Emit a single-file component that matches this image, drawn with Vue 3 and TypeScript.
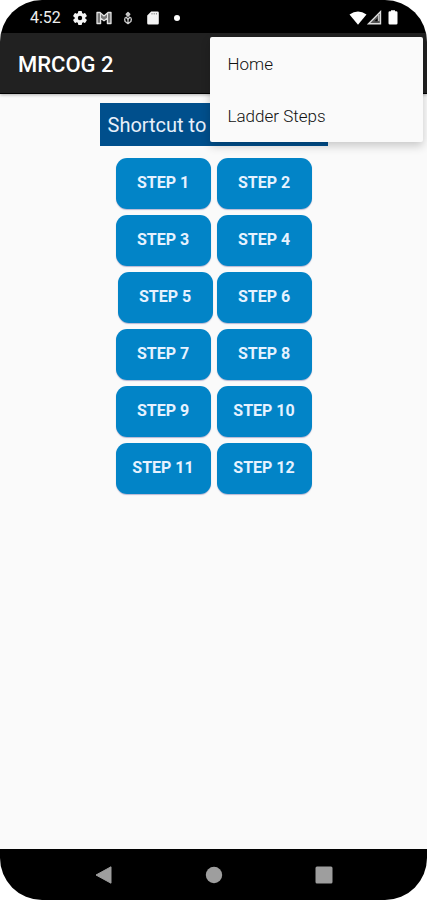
<script setup lang="ts">
interface StepRow {
  steps: number[]
  tight?: boolean
}

const menuItems: string[] = ['Home', 'Ladder Steps']

const rows: StepRow[] = [
  { steps: [1, 2] },
  { steps: [3, 4] },
  { steps: [5, 6], tight: true },
  { steps: [7, 8] },
  { steps: [9, 10] },
  { steps: [11, 12] },
]
</script>

<template>
  <div class="screen">
    <div class="status">
      <div class="status-left">
        <span class="clock">4:52</span>
        <svg class="gear" width="14" height="16" viewBox="0 0 14 16" aria-hidden="true">
          <g fill="#f4f4f4">
            <rect x="5" y="1" width="4" height="14" rx="1" />
            <rect x="5" y="1" width="4" height="14" rx="1" transform="rotate(60 7 8)" />
            <rect x="5" y="1" width="4" height="14" rx="1" transform="rotate(120 7 8)" />
            <circle cx="7" cy="8" r="5.400" />
          </g>
          <circle cx="7" cy="8" r="2.200" fill="#000" />
        </svg>
        <svg class="mail" width="16" height="14" viewBox="0 0 16 14" aria-hidden="true">
          <path d="M1 1.500h3l4 3.400 4-3.400h3v11h-3.600V7.200L8 9.800 4.600 7.200v5.300H1z" fill="#777" stroke="#e4e4e4" stroke-width="1.300" stroke-linejoin="round" />
          <path d="M4.500 2v5M11.500 2v5" stroke="#e4e4e4" />
        </svg>
        <svg class="flame" width="10" height="14" viewBox="0 0 10 14" aria-hidden="true">
          <path d="M5 1v4M3.200 3.200L5 1.400l1.800 1.800L5 5.200zM1.500 7.500L3.300 6.200 5 8.500l1.700-2.300 1.800 1.300M1.500 7.500l.6 3L5 12.600l2.900-2.100.6-3M5 8.500v3" fill="none" stroke="#ccc" stroke-width="1.300" stroke-linejoin="round" />
        </svg>
        <svg class="card" width="12" height="14" viewBox="0 0 12 14" aria-hidden="true">
          <path d="M4.200.5h6.300a1.300 1.300 0 0 1 1.300 1.300v10.400a1.300 1.300 0 0 1-1.300 1.300h-9A1.300 1.300 0 0 1 .2 12.200V4.500z" fill="#f4f4f4" />
          <path d="M5 2v1.500M7.200 2v1.500M9.400 2v1.500" stroke="#888" />
        </svg>
        <span class="dot"></span>
      </div>
      <div class="status-right">
        <svg width="18" height="14" viewBox="0 0 18 14" aria-hidden="true">
          <path d="M.5 3.500Q9-2.500 17.500 3.500L9 13.700z" fill="#fff" />
        </svg>
        <svg width="15" height="15" viewBox="0 0 15 15" aria-hidden="true">
          <path d="M1.600 13.700L13.500 1.800v11.900z" fill="#555" stroke="#ddd" stroke-width="1.400" />
          <path d="M7.500 11.300l3-3v3z" fill="#000" />
          <path d="M11.700 5v6" stroke="#bbb" stroke-width="1.500" />
        </svg>
        <svg class="battery" width="10" height="15" viewBox="0 0 10 15" aria-hidden="true">
          <path d="M3 .3h4v1h1.200A1.300 1.300 0 0 1 9.500 2.600v10.700a1.300 1.300 0 0 1-1.300 1.300H1.800A1.300 1.300 0 0 1 .5 13.300V2.600a1.300 1.300 0 0 1 1.300-1.300H3z" fill="#fff" />
        </svg>
      </div>
    </div>

    <header class="appbar">
      <h1>MRCOG 2</h1>
      <nav class="menu">
        <a v-for="item in menuItems" :key="item" href="#">{{ item }}</a>
      </nav>
    </header>

    <main class="content">
      <h2 class="banner">Shortcut to</h2>
      <div class="steps">
        <div v-for="(row, i) in rows" :key="i" class="row" :class="{ tight: row.tight }">
          <button v-for="n in row.steps" :key="n" type="button">STEP {{ n }}</button>
        </div>
      </div>
    </main>

    <footer class="navbar">
      <button type="button" aria-label="Back">
        <svg width="18" height="18" viewBox="0 0 18 18"><path d="M1 9L16 .8v16.400z" fill="#9e9e9e" stroke="#9e9e9e" stroke-linejoin="round" /></svg>
      </button>
      <button type="button" aria-label="Home">
        <svg width="18" height="18" viewBox="0 0 18 18"><circle cx="9" cy="9" r="8.200" fill="#9e9e9e" /></svg>
      </button>
      <button type="button" aria-label="Recent apps">
        <svg width="18" height="18" viewBox="0 0 18 18"><rect x=".5" y=".5" width="17" height="17" rx="1.500" fill="#9e9e9e" /></svg>
      </button>
    </footer>
  </div>
</template>

<style>
body {
  background: #fff;
}
</style>

<style scoped>
.screen {
  display: flex;
  flex-direction: column;
  min-height: 100vh;
  overflow: hidden;
  border-radius: 42px;
  background: #fafafa;
  font-family: Roboto, "Liberation Sans", sans-serif;
}

.status {
  display: flex;
  justify-content: space-between;
  align-items: center;
  height: 33px;
  padding: 2px 29px 0 30px;
  box-sizing: border-box;
  background: #000;
  color: #eee;
}

.status-left,
.status-right {
  display: flex;
  align-items: center;
}

.clock {
  margin-right: 12px;
  font-size: 16px;
  line-height: 20px;
}

.gear {
  margin-right: 9px;
}

.mail {
  margin-right: 11px;
}

.flame {
  margin-right: 14px;
}

.card {
  margin-right: 15px;
}

.dot {
  width: 6px;
  height: 6px;
  border-radius: 50%;
  background: #fff;
}

.battery {
  margin-left: 6px;
}

.appbar {
  position: relative;
  display: flex;
  align-items: center;
  height: 61px;
  padding: 4px 18px 0;
  box-sizing: border-box;
  background: #212121;
  border-bottom: 1px solid #000;
  box-shadow: 0 1px 3px rgba(0, 0, 0, 0.3);
}

h1 {
  margin: 0;
  color: #fff;
  font-size: 22px;
  font-weight: 500;
  line-height: 28px;
}

.menu {
  position: absolute;
  z-index: 1;
  top: 4px;
  right: 4px;
  display: flex;
  flex-direction: column;
  width: 50%;
  padding-top: 1px;
  border-radius: 2px;
  background: #fafafa;
  box-shadow: 0 4px 10px rgba(0, 0, 0, 0.2);
}

.menu a {
  padding: 14px 18px;
  color: #111;
  font-size: 17px;
  font-weight: 300;
  line-height: 24px;
  text-decoration: none;
}

.content {
  display: flex;
  flex: 1;
  flex-direction: column;
  align-items: center;
  padding-top: 9px;
}

.banner {
  width: 228px;
  margin: 0 0 12px;
  padding: 8px 8px 7px;
  box-sizing: border-box;
  background: #004f8c;
  color: #e8f0fa;
  font-size: 20px;
  font-weight: 400;
  line-height: 28px;
}

.steps {
  display: flex;
  flex-direction: column;
  gap: 6px;
}

.row {
  display: flex;
  justify-content: flex-end;
  gap: 6px;
}

.row.tight {
  gap: 4px;
}

.row button {
  width: 95px;
  height: 51px;
  padding: 0 0 1px;
  border: 0;
  border-radius: 11px;
  background: #0284c7;
  box-shadow: 0 1px 1px rgba(60, 60, 140, 0.35);
  color: #e6f2ff;
  font-family: inherit;
  font-size: 16px;
  font-weight: 700;
  line-height: 20px;
}

.navbar {
  display: flex;
  justify-content: center;
  align-items: center;
  gap: 92px;
  height: 51px;
  background: #000;
}

.navbar button {
  display: flex;
  padding: 0;
  border: 0;
  background: none;
}
</style>
